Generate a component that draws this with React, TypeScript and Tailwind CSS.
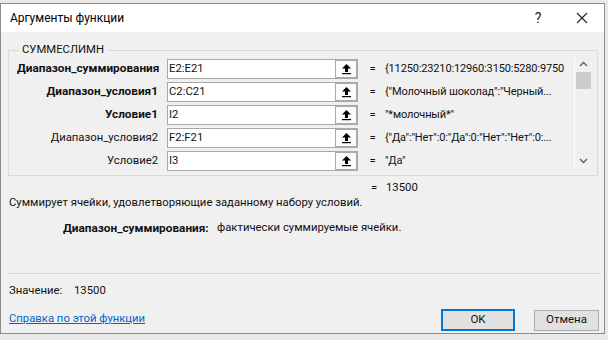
import React from "react";

const rows = [
  { label: "Диапазон_суммирования", bold: true, ref: "E2:E21", value: "{11250:23210:12960:3150:5280:9750" },
  { label: "Диапазон_условия1", bold: true, ref: "C2:C21", value: "{\"Молочный шоколад\":\"Черный..." },
  { label: "Условие1", bold: true, ref: "I2", value: "\"*молочный*\"" },
  { label: "Диапазон_условия2", bold: false, ref: "F2:F21", value: "{\"Да\":\"Нет\":0:\"Да\":0:\"Нет\":\"Нет\":0:..." },
  { label: "Условие2", bold: false, ref: "I3", value: "\"Да\"" },
];

function CollapseIcon() {
  return (
    <svg width="11" height="12" viewBox="0 0 11 12">
      <path d="M5.5 1 L10 5.5 L7 5.5 L7 9 L4 9 L4 5.5 L1 5.5 Z" fill="#000" />
      <rect x="1" y="10" width="9" height="1.2" fill="#000" />
    </svg>
  );
}

export default function App() {
  return (
    <div
      className="w-[608px] h-[340px] overflow-hidden bg-[#e9e9e9] pt-[3px] text-[#111]"
      style={{ fontFamily: '"Segoe UI", Roboto, "Noto Sans", sans-serif' }}
    >
      <div className="w-[605px] h-[331px] border border-[#8c8c8c] bg-[#f0f0f0] bg-[radial-gradient(#dedede_0.6px,transparent_0.7px)] bg-[length:8px_8px] flex flex-col">
        {/* Title bar */}
        <div className="h-[28px] bg-white flex items-center shrink-0">
          <span className="pl-[9px] text-[12px] text-black flex-1">Аргументы функции</span>
          <span className="text-[14px] w-[20px] mr-[28px] text-center text-[#222]">?</span>
          <svg className="mr-[16px]" width="12" height="12" viewBox="0 0 12 12">
            <path d="M1 1 L11 11 M11 1 L1 11" stroke="#222" strokeWidth="1.1" />
          </svg>
        </div>

        <div className="flex-1 px-[7px] pt-[13px] text-[11.3px]">
          {/* Group box */}
          <fieldset className="border border-[#dadada] h-[131px] pl-[8px] pr-[6px] relative">
            <legend className="ml-[2px] px-[3px] leading-[10px] text-[#111]">СУММЕСЛИМН</legend>
            <div className="flex pt-[4px]">
              <div className="flex flex-col gap-[3px]">
                {rows.map((r) => (
                  <div key={r.label} className="flex items-center h-[20px]">
                    <span className={"w-[150px] text-right pr-[9px] whitespace-nowrap " + (r.bold ? "font-bold text-[11.8px]" : "")}>{r.label}</span>
                    <div className="w-[169px] h-[20px] border border-[#a9a9a9] bg-white flex items-center pl-[1px]">
                      {r.ref}
                    </div>
                    <div className="w-[22px] h-[20px] border-2 border-[#a9a9a9] border-l-0 bg-[#fbfbfb] flex items-center justify-center">
                      <CollapseIcon />
                    </div>
                    <span className="w-[27px] text-center pl-[2px]">=</span>
                    <span className="w-[188px] whitespace-nowrap overflow-hidden text-[11px] tracking-[-0.15px]">{r.value}</span>
                  </div>
                ))}
              </div>
              {/* scrollbar */}
              <div className="ml-[1px] w-[17px] h-[112px] border-l border-white flex flex-col items-center -mt-[2px]">
                <svg className="mt-[4px]" width="9" height="6" viewBox="0 0 9 6">
                  <path d="M1 5 L4.5 1.5 L8 5" stroke="#606060" strokeWidth="1.4" fill="none" />
                </svg>
                <div className="mt-[5px] w-[15px] h-[17px] bg-[#cdcdcd]" />
                <div className="flex-1" />
                <svg className="mb-[5px]" width="9" height="6" viewBox="0 0 9 6">
                  <path d="M1 1 L4.5 4.5 L8 1" stroke="#606060" strokeWidth="1.4" fill="none" />
                </svg>
              </div>
            </div>
          </fieldset>

          <div className="flex h-[16px] items-center mt-[4px]">
            <span className="w-[363px]" />
            <span className="w-[15px]">=</span>
            <span>13500</span>
          </div>

          <div className="-mt-[1px] pl-[1px]">Суммирует ячейки, удовлетворяющие заданному набору условий.</div>

          <div className="mt-[8px] flex items-center pl-[55px]">
            <span className="font-bold text-[11.8px] w-[154px]">Диапазон_суммирования:</span>
            <span>фактически суммируемые ячейки.</span>
          </div>

          <div className="mt-[35px] h-px bg-[#d9d9d9] mr-[-4px]" />

          <div className="mt-[9px] pl-[1px] flex">
            <span className="w-[65px]">Значение:</span>
            <span>13500</span>
          </div>

          <div className="flex items-end mt-[9px]">
            <a className="pl-[1px] text-[#0066cc] underline mb-[3px] flex-1">Справка по этой функции</a>
            <button className="w-[74px] h-[22px] border-2 border-[#0078d7] bg-[#e1e1e1] text-[11.5px]">OK</button>
            <button className="ml-[19px] mr-[-2px] w-[65px] h-[21px] border border-[#adadad] bg-[#e1e1e1] text-[11.5px]">Отмена</button>
          </div>
        </div>
      </div>
    </div>
  );
}
